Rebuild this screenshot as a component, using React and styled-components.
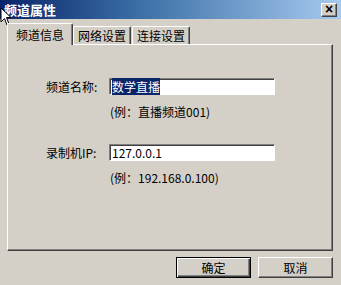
import React from "react";
import styled, { createGlobalStyle } from "styled-components";

const Global = createGlobalStyle`
  html, body { margin: 0; padding: 0; background: #d4d0c8; }
  body { font-family: "Noto Sans CJK SC", "Liberation Sans", sans-serif; font-size: 12px; }
`;

function App() {
  return (
    <Window>
      <Global />
      <TitleBar>
        <Title>频道属性</Title>
        <CloseBtn>×</CloseBtn>
      </TitleBar>
      <Cursor viewBox="0 0 12 20" width="12" height="20">
        <path d="M1 1 L1 15 L4.5 11.5 L7 18 L9 17 L6.5 10.5 L11 10.5 Z" fill="#fff" stroke="#000" strokeWidth="1" />
      </Cursor>
      <Tabs>
        <Tab active>频道信息</Tab>
        <Tab>网络设置</Tab>
        <Tab>连接设置</Tab>
      </Tabs>
      <Panel>
        <Field>
          <Label>频道名称:</Label>
          <Input><Selected>数学直播</Selected></Input>
        </Field>
        <Hint>(例：直播频道001)</Hint>
        <Field second>
          <Label>录制机IP:</Label>
          <Input>127.0.0.1</Input>
        </Field>
        <Hint>(例：192.168.0.100)</Hint>
      </Panel>
      <Buttons>
        <Button primary>确定</Button>
        <Button>取消</Button>
      </Buttons>
    </Window>
  );
}

export default App;

const Window = styled.div`
  position: relative;
  width: 341px;
  height: 285px;
  background: #d4d0c8;
  overflow: hidden;
  display: flex;
  flex-direction: column;
`;

const TitleBar = styled.div`
  height: 19px;
  background: linear-gradient(to right, #0a246a 0%, #3a6ea5 40%, #a6caf0 100%);
  display: flex;
  align-items: center;
  justify-content: space-between;
  padding: 0 4px 0 4px;
`;

const Title = styled.div`
  color: #fff;
  font-weight: bold;
  font-size: 13px;
  line-height: 19px;
`;

const CloseBtn = styled.div`
  width: 14px;
  height: 12px;
  background: #d4d0c8;
  border-top: 1px solid #fff;
  border-left: 1px solid #fff;
  border-right: 1px solid #404040;
  border-bottom: 1px solid #404040;
  box-shadow: inset -1px -1px 0 #808080;
  font-family: "Liberation Sans", sans-serif;
  font-weight: bold;
  font-size: 14px;
  line-height: 11px;
  text-align: center;
  color: #000;
`;

const Cursor = styled.svg`
  position: absolute;
  left: 0;
  top: 7px;
`;

const Tabs = styled.div`
  display: flex;
  align-items: flex-end;
  padding-left: 7px;
  margin-top: 4px;
  height: 21px;
  position: relative;
  z-index: 1;
`;

const Tab = styled.div`
  height: 18px;
  padding: 0 ${p => (p.active ? "8px" : "4px")};
  margin-right: 1px;
  background: #d4d0c8;
  border-top: 1px solid #fff;
  border-left: 1px solid #fff;
  border-right: 1px solid #404040;
  box-shadow: inset -1px 0 0 #808080;
  border-radius: 2px 2px 0 0;
  box-sizing: border-box;
  display: flex;
  align-items: center;
  font-size: 12px;
  color: #000;
  ${p => p.active && "margin-bottom: -1px; height: 22px; margin-right: 0;"}
`;

const Panel = styled.div`
  margin: 0 8px 0 7px;
  height: 207px;
  box-sizing: border-box;
  border-top: 1px solid #fff;
  border-left: 1px solid #fff;
  border-right: 1px solid #404040;
  border-bottom: 1px solid #404040;
  box-shadow: inset -1px -1px 0 #808080;
  padding: 33px 0 0 38px;
  display: flex;
  flex-direction: column;
`;

const Field = styled.div`
  display: flex;
  align-items: center;
  margin-top: ${p => (p.second ? "24px" : "0")};
`;

const Label = styled.div`
  width: 63px;
  font-size: 12px;
  color: #000;
`;

const Input = styled.div`
  width: 166px;
  height: 17px;
  box-sizing: border-box;
  background: #fff;
  border-top: 1px solid #808080;
  border-left: 1px solid #808080;
  border-right: 1px solid #fff;
  border-bottom: 1px solid #fff;
  box-shadow: inset 1px 1px 0 #404040;
  padding: 0 2px;
  font-size: 12px;
  line-height: 15px;
  color: #000;
`;

const Selected = styled.span`
  background: #0a246a;
  color: #fff;
`;

const Hint = styled.div`
  margin: 8px 0 0 64px;
  font-size: 12px;
  color: #000;
`;

const Buttons = styled.div`
  display: flex;
  justify-content: flex-end;
  gap: 7px;
  padding: 6px 8px 0 0;
`;

const Button = styled.div`
  width: 75px;
  height: 21px;
  box-sizing: border-box;
  background: #d4d0c8;
  border-top: 1px solid ${p => (p.primary ? "#000" : "#fff")};
  border-left: 1px solid ${p => (p.primary ? "#000" : "#fff")};
  border-right: 1px solid ${p => (p.primary ? "#000" : "#404040")};
  border-bottom: 1px solid ${p => (p.primary ? "#000" : "#404040")};
  box-shadow: ${p =>
    p.primary
      ? "inset 1px 1px 0 #fff, inset -1px -1px 0 #404040, inset -2px -2px 0 #808080"
      : "inset -1px -1px 0 #808080"};
  display: flex;
  align-items: center;
  justify-content: center;
  font-size: 12px;
  color: #000;
`;
